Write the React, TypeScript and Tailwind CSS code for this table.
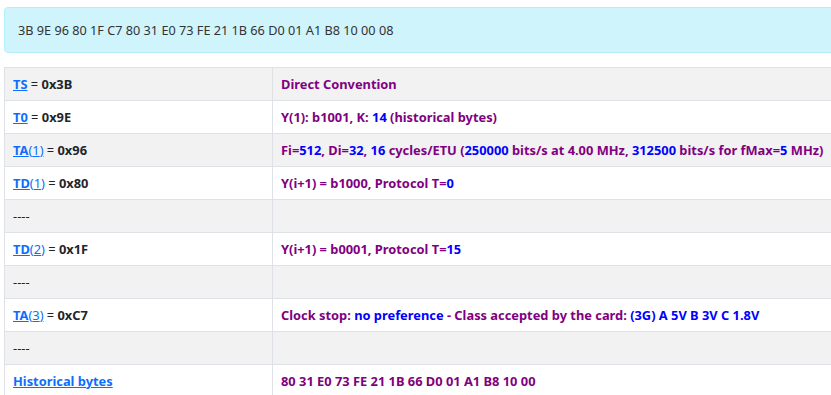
import React from "react";

type Part = { t: string; c: "p" | "b" };

const P = (t: string): Part => ({ t, c: "p" });
const B = (t: string): Part => ({ t, c: "b" });

type Row = {
  name?: string;
  idx?: string;
  value?: string;
  desc: Part[];
  dash?: boolean;
};

const rows: Row[] = [
  { name: "TS", value: "0x3B", desc: [P("Direct Convention")] },
  { name: "T0", value: "0x9E", desc: [P("Y(1): b1001, K: "), B("14"), P(" (historical bytes)")] },
  {
    name: "TA",
    idx: "1",
    value: "0x96",
    desc: [
      P("Fi="),
      B("512"),
      P(", Di="),
      B("32"),
      P(", "),
      B("16"),
      P(" cycles/ETU ("),
      B("250000"),
      P(" bits/s at 4.00 MHz, "),
      B("312500"),
      P(" bits/s for fMax="),
      B("5"),
      P(" MHz)"),
    ],
  },
  { name: "TD", idx: "1", value: "0x80", desc: [P("Y(i+1) = b1000, Protocol T="), B("0")] },
  { dash: true, desc: [] },
  { name: "TD", idx: "2", value: "0x1F", desc: [P("Y(i+1) = b0001, Protocol T="), B("15")] },
  { dash: true, desc: [] },
  {
    name: "TA",
    idx: "3",
    value: "0xC7",
    desc: [
      P("Clock stop: "),
      B("no preference"),
      P(" - Class accepted by the card: "),
      B("(3G) A 5V B 3V C 1.8V"),
    ],
  },
  { dash: true, desc: [] },
];

export default function App() {
  return (
    <div
      className="w-[831px] h-[395px] overflow-hidden bg-white text-[12.85px] leading-[17px]"
      style={{ fontFamily: '"Noto Sans", "Open Sans", sans-serif' }}
    >
      <div className="pl-1 pt-[7px] w-[1000px]">
        {/* ATR bytes */}
        <div className="h-[46px] flex items-center pl-[13px] rounded-[4px] border border-[#b6effb] bg-[#cff4fc] text-[#333] text-[12.7px]">
          3B 9E 96 80 1F C7 80 31 E0 73 FE 21 1B 66 D0 01 A1 B8 10 00 08
        </div>

        <table className="mt-[14px] w-full border-collapse border border-[#dee2e6]">
          <tbody>
            {rows.map((r, i) => (
              <tr key={i} className={i % 2 === 0 ? "bg-[#f2f2f2]" : "bg-white"}>
                <td className="w-[268px] h-[33px] px-2 border border-[#dee2e6] font-bold text-[#212529]">
                  {r.dash ? (
                    <span className="font-normal">----</span>
                  ) : (
                    <>
                      <a href="#" className="text-[#0d6efd] underline">
                        {r.name}
                        {r.idx && <span className="font-normal">({r.idx})</span>}
                      </a>
                      <span className="font-normal"> = </span>
                      {r.value}
                    </>
                  )}
                </td>
                <td className="h-[33px] px-2 border border-[#dee2e6] font-bold">
                  {r.desc.map((d, j) => (
                    <span key={j} className={d.c === "p" ? "text-[#800080]" : "text-[#0000ff]"}>
                      {d.t}
                    </span>
                  ))}
                </td>
              </tr>
            ))}
            <tr className="bg-white">
              <td className="h-[33px] px-2 border border-[#dee2e6] font-bold">
                <a href="#" className="text-[#0d6efd] underline">
                  Historical bytes
                </a>
              </td>
              <td className="h-[33px] px-2 border border-[#dee2e6] font-bold text-[#800080]">
                80 31 E0 73 FE 21 1B 66 D0 01 A1 B8 10 00
              </td>
            </tr>
          </tbody>
        </table>
      </div>
    </div>
  );
}
